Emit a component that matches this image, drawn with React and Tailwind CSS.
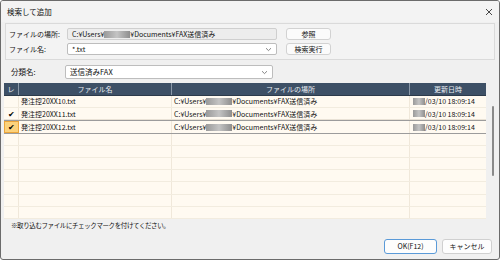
import React from "react";

const F = { fontFamily: '"Noto Sans CJK JP", "Noto Sans", sans-serif' };

function Blur({ w }) {
  return (
    <span
      className="inline-block h-[7px] bg-gradient-to-r from-[#9a9a9a] via-[#c4c4c4] to-[#8e8e8e] align-middle"
      style={{ width: w }}
    />
  );
}

function Chevron() {
  return (
    <svg width="7" height="5" viewBox="0 0 7 5" className="shrink-0">
      <path d="M1 1.2 L3.5 3.6 L6 1.2" fill="none" stroke="#666" strokeWidth="0.8" />
    </svg>
  );
}

function Path() {
  return (
    <span className="flex items-center whitespace-nowrap">
      <span>C:¥Users¥</span>
      <Blur w={26} />
      <span>¥Documents¥FAX送信済み</span>
    </span>
  );
}

const rows = [
  { name: "発注控20XX10.txt", checked: false, sel: false },
  { name: "発注控20XX11.txt", checked: true, sel: false },
  { name: "発注控20XX12.txt", checked: true, sel: true },
];

export default function App() {
  return (
    <div
      className="w-[500px] h-[260px] bg-[#f0f0f0] border border-[#6b6b6b] rounded-[3px] flex flex-col text-[7px] text-[#111] overflow-hidden"
      style={F}
    >
      {/* title bar */}
      <div className="h-[21px] shrink-0 flex items-center justify-between pl-[6px] pr-[6px] bg-[#f3f3f3]">
        <span className="text-[7.5px]">検索して追加</span>
        <svg width="8" height="8" viewBox="0 0 8 8">
          <path d="M1 1 L7 7 M7 1 L1 7" stroke="#333" strokeWidth="0.9" />
        </svg>
      </div>

      {/* group box */}
      <div className="mx-[4px] mt-[1px] h-[37px] border border-[#dadada] bg-[#f3f3f3] flex flex-col justify-center gap-[3px] pl-[3px]">
        <div className="flex items-center h-[12px]">
          <span className="w-[58px] text-[7px]">ファイルの場所:</span>
          <div className="w-[210px] h-[12px] border border-[#cfcfcf] rounded-[2px] bg-[#ededed] flex items-center px-[4px]">
            <Path />
          </div>
          <button className="ml-[9px] w-[45px] h-[12px] border border-[#d2d2d2] rounded-[3px] bg-[#fbfbfb] text-[7px] leading-none">
            参照
          </button>
        </div>
        <div className="flex items-center h-[12px]">
          <span className="w-[58px] text-[7px]">ファイル名:</span>
          <div className="w-[210px] h-[12px] border border-[#bdbdbd] rounded-[2px] bg-white flex items-center justify-between px-[4px]">
            <span>*.txt</span>
            <Chevron />
          </div>
          <button className="ml-[9px] w-[45px] h-[12px] border border-[#d2d2d2] rounded-[3px] bg-[#fbfbfb] text-[7px] leading-none">
            検索実行
          </button>
        </div>
      </div>

      {/* category */}
      <div className="flex items-center h-[14px] mt-[5px] pl-[10px]">
        <span className="w-[54px] text-[7.5px]">分類名:</span>
        <div className="w-[208px] h-[14px] border border-[#bdbdbd] rounded-[2px] bg-white flex items-center justify-between px-[4px]">
          <span className="text-[7.5px]">送信済みFAX</span>
          <Chevron />
        </div>
      </div>

      {/* table */}
      <div className="flex mt-[4px] ml-[3px] h-[136px]">
        <div className="w-[482px] flex flex-col">
          <div className="h-[13px] shrink-0 flex bg-[#3d5066] text-[#e8edf2] text-[7px] border-b border-[#2c3a4a]">
            <div className="w-[15px] flex items-center justify-center border-r border-[#8a98a8]">レ</div>
            <div className="w-[153px] flex items-center justify-center border-r border-[#8a98a8]">ファイル名</div>
            <div className="w-[238px] flex items-center justify-center border-r border-[#8a98a8]">ファイルの場所</div>
            <div className="flex-1 flex items-center justify-center">更新日時</div>
          </div>
          <div className="flex-1 flex flex-col bg-[#fffaf1]">
            {Array.from({ length: 10 }).map((_, i) => {
              const r = rows[i];
              return (
                <div
                  key={i}
                  className={
                    "flex-1 flex border-b " +
                    (r && r.sel
                      ? "border-[#9c9c9c] border-t border-t-[#9c9c9c]"
                      : i === 1
                      ? "border-[#e9e2d6]"
                      : "border-[#f2ecdf]")
                  }
                >
                  <div
                    className={
                      "w-[15px] flex items-center justify-center " +
                      (r && r.sel
                        ? "bg-[#fcd27c] border border-[#eba53a]"
                        : "border-r border-[#f0e8da]")
                    }
                  >
                    {r && r.checked ? <span className="text-[8px] leading-none text-black">✔</span> : null}
                  </div>
                  <div className="w-[153px] flex items-center pl-[2px] border-r border-[#f0e8da]">
                    {r ? r.name : null}
                  </div>
                  <div className="w-[238px] flex items-center pl-[2px] border-r border-[#f0e8da]">
                    {r ? <Path /> : null}
                  </div>
                  <div className="flex-1 flex items-center pl-[3px]">
                    {r ? (
                      <span className="flex items-center">
                        <Blur w={12} />
                        <span>/03/10 18:09:14</span>
                      </span>
                    ) : null}
                  </div>
                </div>
              );
            })}
          </div>
        </div>
        <div className="flex-1 flex justify-center pt-[23px]">
          <div className="w-[2px] h-[70px] bg-[#8a8a8a] rounded-full" />
        </div>
      </div>

      {/* note */}
      <div className="pl-[10px] mt-[2px] text-[6.5px] tracking-[-0.4px]">※取り込むファイルにチェックマークを付けてください。</div>

      {/* buttons */}
      <div className="flex justify-end gap-[5px] pr-[7px] mt-[8px]">
        <button className="w-[53px] h-[15px] border border-[#5a9ad8] rounded-[3px] bg-[#fdfdfd] text-[7px] leading-none">
          OK(F12)
        </button>
        <button className="w-[50px] h-[15px] border border-[#d0d0d0] rounded-[3px] bg-[#fdfdfd] text-[7px] leading-none">
          キャンセル
        </button>
      </div>
    </div>
  );
}
